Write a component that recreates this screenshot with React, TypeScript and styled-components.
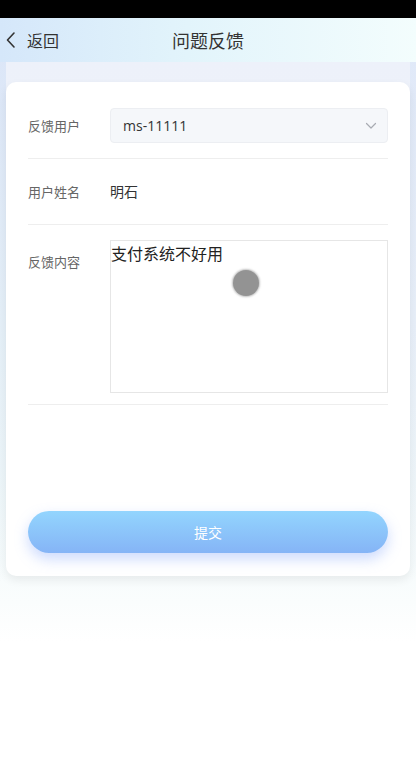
import styled, { createGlobalStyle } from 'styled-components';

// ============================================================================
// Styled Components
// ============================================================================

const GlobalStyle = createGlobalStyle`
  html, body {
    margin: 0;
    padding: 0;
    background: #ffffff;
    font-family: "Noto Sans CJK SC", "Noto Sans", sans-serif;
  }
  * {
    box-sizing: border-box;
  }
`;

const Page = styled.div`
  width: 416px;
  min-height: 781px;
  display: flex;
  flex-direction: column;
  background: #ffffff;
`;

const StatusBar = styled.div`
  height: 18px;
  background: #000000;
`;

const Header = styled.div`
  position: relative;
  height: 44px;
  display: flex;
  align-items: center;
  justify-content: center;
  background: linear-gradient(90deg, #d5e7fa 0%, #e2f4fb 45%, #f3fdfd 100%);
`;

const BackButton = styled.button`
  position: absolute;
  left: 5px;
  top: 0;
  height: 44px;
  display: flex;
  align-items: center;
  gap: 10px;
  padding: 0;
  border: none;
  background: transparent;
  font-family: inherit;
  font-size: 16px;
  color: #333;
`;

const Title = styled.h1`
  margin: 0;
  font-size: 18px;
  font-weight: 400;
  color: #333;
`;

const Body = styled.div`
  flex: 1;
  padding: 20px 6px 0;
  background:
    linear-gradient(180deg, rgba(216, 228, 247, 0.8) 0px, rgba(220, 236, 246, 0.5) 280px, rgba(230, 246, 246, 0) 520px) left 0 top 0 / 6px 520px no-repeat,
    linear-gradient(180deg, rgba(216, 228, 247, 0.6) 0px, rgba(230, 246, 246, 0) 520px) right 0 top 0 / 6px 520px no-repeat,
    linear-gradient(
      180deg,
      #edf1fa 0px,
      #eff4fa 260px,
      #f1f8fa 420px,
      #f6fbfc 500px,
      #fafdfd 540px,
      #ffffff 580px
    );
`;

const Card = styled.div`
  background: #ffffff;
  border-radius: 10px;
  padding: 11px 22px 23px;
  box-shadow: 0 4px 10px rgba(0, 0, 0, 0.07);
`;

const Row = styled.div<{ $top?: boolean; $padBottom?: number }>`
  display: flex;
  align-items: ${(p) => (p.$top ? 'flex-start' : 'center')};
  padding: 15px 0 ${(p) => p.$padBottom ?? 15}px;
  border-bottom: 1px solid #eeeeee;
  min-height: 66px;
`;

const Label = styled.div<{ $offset?: number }>`
  width: 82px;
  flex-shrink: 0;
  font-size: 13px;
  color: #666;
  margin-top: ${(p) => p.$offset ?? 0}px;
`;

const Select = styled.div`
  flex: 1;
  height: 35px;
  display: flex;
  align-items: center;
  justify-content: space-between;
  padding: 0 10px 0 12px;
  background: #f5f7fa;
  border: 1px solid #eceef2;
  border-radius: 4px;
  font-family: "Open Sans", "Noto Sans", sans-serif;
  font-size: 14px;
  color: #333;
`;

const Value = styled.div`
  font-size: 14px;
  color: #333;
  line-height: 35px;
`;

const TextBox = styled.div`
  position: relative;
  flex: 1;
  height: 153px;
  border: 1px solid #e6e6e6;
  padding: 1px 0 0 0;
  font-size: 16px;
  line-height: 22px;
  color: #222;
`;

const TouchDot = styled.span`
  position: absolute;
  left: 122px;
  top: 29px;
  width: 26px;
  height: 26px;
  border-radius: 50%;
  background: #939393;
  box-shadow: 0 0 2px 1px rgba(150, 150, 150, 0.6);
`;

const Spacer = styled.div`
  height: 106px;
`;

const SubmitButton = styled.button`
  display: block;
  width: 100%;
  height: 42px;
  border: none;
  border-radius: 21px;
  background: linear-gradient(180deg, #93d5fe 0%, #85b4f6 100%);
  box-shadow: 0 6px 14px rgba(110, 150, 250, 0.35);
  color: #ffffff;
  font-family: inherit;
  font-size: 14px;
`;

// ============================================================================
// Component
// ============================================================================

export default function App() {
  return (
    <Page>
      <GlobalStyle />
      <StatusBar />
      <Header>
        <BackButton type="button">
          <svg width="12" height="18" viewBox="0 0 12 18" fill="none">
            <path d="M9 2 L2.5 9 L9 16" stroke="#333" strokeWidth="1.6" strokeLinecap="round" strokeLinejoin="round" />
          </svg>
          返回
        </BackButton>
        <Title>问题反馈</Title>
      </Header>
      <Body>
        <Card>
          <Row>
            <Label>反馈用户</Label>
            <Select>
              ms-11111
              <svg width="12" height="8" viewBox="0 0 12 8" fill="none">
                <path d="M1.5 1.5 L6 6 L10.5 1.5" stroke="#a8abb2" strokeWidth="1.2" strokeLinecap="round" strokeLinejoin="round" />
              </svg>
            </Select>
          </Row>
          <Row>
            <Label>用户姓名</Label>
            <Value>明石</Value>
          </Row>
          <Row $top $padBottom={11}>
            <Label $offset={12}>反馈内容</Label>
            <TextBox>
              支付系统不好用
              <TouchDot />
            </TextBox>
          </Row>
          <Spacer />
          <SubmitButton type="button">提交</SubmitButton>
        </Card>
      </Body>
    </Page>
  );
}
